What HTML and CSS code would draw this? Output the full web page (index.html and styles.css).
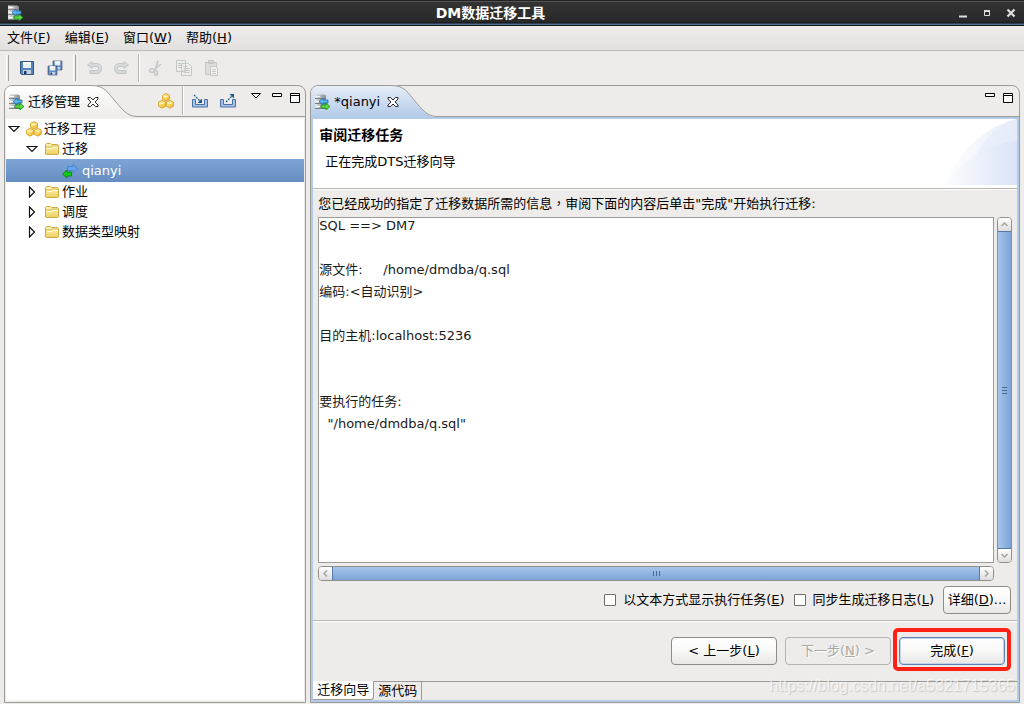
FILE: index.html
```html
<!DOCTYPE html>
<html lang="zh-CN">
<head>
<meta charset="utf-8">
<title>DM数据迁移工具</title>
<link rel="stylesheet" href="styles.css">
</head>
<body>
<svg class="defs" aria-hidden="true">
  <defs>
    <linearGradient id="gold" x1="0" y1="0" x2="1" y2="1"><stop offset="0" stop-color="#fff3a0"/><stop offset="1" stop-color="#efb41c"/></linearGradient>
    <linearGradient id="folderFill" x1="0" y1="0" x2="0" y2="1"><stop offset="0" stop-color="#fff3b4"/><stop offset="1" stop-color="#ecd063"/></linearGradient>
    <linearGradient id="metal" x1="0" x2="1"><stop offset="0" stop-color="#e4e6e8"/><stop offset="1" stop-color="#858b90"/></linearGradient>
    <linearGradient id="tabWhite" x1="0" y1="0" x2="0" y2="1"><stop offset="0" stop-color="#fff"/><stop offset="1" stop-color="#edecea"/></linearGradient>
    <linearGradient id="tabBlue" x1="0" y1="0" x2="0" y2="1"><stop offset="0" stop-color="#e6eef9"/><stop offset="1" stop-color="#b3cae8"/></linearGradient>
    <linearGradient id="arcFill" x1="0" x2="1"><stop offset="0" stop-color="#fff"/><stop offset="1" stop-color="#e6ecf9"/></linearGradient>
    <linearGradient id="arcFill2" x1="0" x2="1"><stop offset="0" stop-color="#fdfdff"/><stop offset="1" stop-color="#dae3f6"/></linearGradient>
    <symbol id="server" viewBox="0 0 16 16">
      <path d="M1 .5h9l2 1v13H1z" fill="url(#metal)"/>
      <path d="M1 4.500h11M1 9.500h11M1 14.500h11" stroke="#7b8185"/>
      <path d="M2 2.500h4M2 7.500h4M2 12.500h4" stroke="#fff"/>
      <path d="M5 7.500l4-3.500v2h5v3H9v2z" fill="#58b6f4" stroke="#1d69b2" stroke-width=".8"/>
      <path d="M16 12.500l-4-3.500v2H7v3h5v2z" fill="#5ddb3c" stroke="#168c1b" stroke-width=".8"/>
    </symbol>
    <symbol id="floppy" viewBox="0 0 16 16">
      <path d="M1.500 1.500h13v13h-12l-1-1z" fill="#5783bb" stroke="#34557f"/>
      <path d="M4 2h8v6H4z" fill="#e8f2f0"/><path d="M4 2h8v2H4z" fill="#fff"/>
      <path d="M4 10h8v4H4z" fill="#c6d3df"/><path d="M5 11h2.500v3H5z" fill="#1f3d66"/>
    </symbol>
    <symbol id="cubes" viewBox="0 0 16 16">
      <g fill="url(#gold)" stroke="#d09a1c" stroke-width=".8">
        <path d="M8 .5l3.500 1.800v4L8 8 4.500 6.300v-4z"/>
        <path d="M4.200 7.300L7.700 9v4.200l-3.500 2-3.600-2V9z"/>
        <path d="M11.800 7.300L15.400 9v4.200l-3.600 2-3.500-2V9z"/>
      </g>
      <path d="M5.500 2.800L8 4l2.500-1.200M1.600 9.500l2.600 1.200 2.500-1.200M9.300 9.500l2.500 1.200 2.600-1.200" stroke="#fffbe0" fill="none"/>
    </symbol>
    <symbol id="folder" viewBox="0 0 16 16">
      <path d="M1.500 13V3.500l1-1h4l1 1h6l1 1V13l-1 .5h-11z" fill="url(#folderFill)" stroke="#cdaa42"/>
      <path d="M2 6h5l1-1h6" stroke="#d9bc5c" fill="none"/><path d="M3 7.500h5l1-1h5" stroke="#fffbdc" fill="none"/>
    </symbol>
    <symbol id="down" viewBox="0 0 12 8"><path d="M1 1.500h10L6 6.500z" fill="#fff" stroke="#111" stroke-width="1.200"/></symbol>
    <symbol id="right" viewBox="0 0 8 12"><path d="M1.500 1l5 5-5 5z" fill="#fff" stroke="#111" stroke-width="1.200"/></symbol>
    <symbol id="close" viewBox="0 0 12 12"><path d="M1 1.500h2.500L6 4l2.500-2.500H11V3L8 6l3 3v1.500H8.500L6 8l-2.500 2.500H1V9l3-3-3-3z" fill="#fff" stroke="#111" stroke-width=".9"/></symbol>
    <symbol id="min" viewBox="0 0 11 5"><path d="M.5.5h9v3h-9z" fill="#fff" stroke="#000"/></symbol>
    <symbol id="max" viewBox="0 0 11 11"><path d="M.5.5h9v9h-9zM.5 2.500h9" fill="#fff" stroke="#000"/></symbol>
  </defs>
</svg>

<div class="app">
  <header class="titlebar">
    <svg class="i16"><use href="#server"/></svg>
    <h1>DM数据迁移工具</h1>
    <div class="winbtns">
      <button aria-label="最小化"><svg width="10" height="10"><path d="M1 8.500h8" stroke="#ddd" stroke-width="2"/></svg></button>
      <button aria-label="最大化"><svg width="10" height="10"><path d="M2.500 3.500h5v4h-5z" stroke="#ddd" fill="none"/><path d="M2 3h6" stroke="#ddd" stroke-width="2"/></svg></button>
      <button aria-label="关闭"><svg width="10" height="10"><path d="M1.500 1.500l7 7M8.500 1.500l-7 7" stroke="#ddd" stroke-width="2.300"/></svg></button>
    </div>
  </header>

  <nav class="menubar">
    <button>文件(<u>F</u>)</button><button>编辑(<u>E</u>)</button><button>窗口(<u>W</u>)</button><button>帮助(<u>H</u>)</button>
  </nav>

  <div class="toolbar">
    <span class="grip"></span>
    <button aria-label="保存"><svg class="i16"><use href="#floppy"/></svg></button>
    <button aria-label="全部保存"><svg class="i16" viewBox="0 0 16 16"><use href="#floppy" x="5" y="0" width="11" height="11"/><use href="#floppy" x="0" y="5" width="11" height="11"/></svg></button>
    <span class="grip second"></span>
    <button disabled aria-label="撤销"><svg class="i16"><path d="M6 1.500L1.500 5 6 8.500V6.500h4.500q2 0 2 2t-2 2H4v3h7q4.500-.5 4.500-5T11 3.500H6z" fill="#d6d9d9" stroke="#c3c6c6"/></svg></button>
    <button disabled aria-label="重做"><svg class="i16"><path d="M10 1.500L14.500 5 10 8.500V6.500H5.500q-2 0-2 2t2 2H12v3H5Q.5 13 .5 8.500T5 3.500h5z" fill="#d6d9d9" stroke="#c3c6c6"/></svg></button>
    <span class="line"></span>
    <button disabled aria-label="剪切"><svg class="i16" fill="none" stroke="#c4c7c8" stroke-width="1.600"><path d="M10 .5L7.500 9M13 4L6 10"/><ellipse cx="4" cy="10.500" rx="2.500" ry="1.800"/><ellipse cx="8" cy="13" rx="1.600" ry="2.200"/></svg></button>
    <button disabled aria-label="复制"><svg class="i16" fill="#eeeeec" stroke="#c4c6c4"><path d="M.5.5h9v11h-9zM5.500 3.500h7l3 3v9h-10z"/><path d="M2 3.500h3M2 5.500h3M2 7.500h3M7.500 6.500h4M7.500 8.500h6M7.500 10.500h6M7.500 12.500h6"/></svg></button>
    <button disabled aria-label="粘贴"><svg class="i16" fill="#dddeda" stroke="#c4c6c4"><path d="M1.500 2.500h11v12h-11zM4.500.5h5v3h-5z"/><path d="M6.500 6.500h5l2 2v7h-7z" fill="#f2f2f0"/><path d="M8 9.500h4M8 11.500h4M8 13.500h4"/></svg></button>
  </div>

  <main class="workspace">
    <section class="panel side">
      <div class="tabrow">
        <div class="tab"><svg class="i16"><use href="#server"/></svg><span>迁移管理</span><svg class="x"><use href="#close"/></svg></div>
        <svg class="curve" viewBox="0 0 46 32"><path d="M0 0C14 0 17 8 24 16S36 32 46 32H0z" fill="url(#tabWhite)"/><path d="M0 .5C14 .5 17 8 24 16S36 31.500 46 31.500" fill="none" stroke="#9d9b97"/></svg>
        <div class="tools">
          <button aria-label="工程"><svg class="i16"><use href="#cubes"/></svg></button>
          <span class="line"></span>
          <button aria-label="导入"><svg class="i16" fill="none"><path d="M3.500 6.500h-3v7.500h15V6.500h-3v5h-9z" fill="#a9c2e4" stroke="#4c71aa"/><path d="M2 2l6 6" stroke="#155c86" stroke-width="1.200" stroke-dasharray="2 1"/><path d="M10 5.500V10H5.500z" fill="#155c86"/></svg></button>
          <button aria-label="导出"><svg class="i16" fill="none"><path d="M3.500 6.500h-3v7.500h15V6.500h-3v5h-9z" fill="#a9c2e4" stroke="#4c71aa"/><path d="M6 9l6-6" stroke="#155c86" stroke-width="1.200" stroke-dasharray="2 1"/><path d="M14 1v4.500L9.500 1z" fill="#155c86"/></svg></button>
        </div>
        <div class="viewbtns">
          <button aria-label="菜单"><svg width="10" height="6"><path d="M.5.5h9L5 5z" fill="#fff" stroke="#000"/></svg></button>
          <button aria-label="最小化视图"><svg width="11" height="5"><use href="#min"/></svg></button>
          <button aria-label="最大化视图"><svg width="11" height="11"><use href="#max"/></svg></button>
        </div>
      </div>
      <ul class="tree">
        <li class="l0"><svg class="arrow"><use href="#down"/></svg><svg class="i16"><use href="#cubes"/></svg>迁移工程</li>
        <li class="l1"><svg class="arrow"><use href="#down"/></svg><svg class="i16"><use href="#folder"/></svg>迁移</li>
        <li class="l2 selected"><svg class="i16"><path d="M15.500 5.500L11 1.500v2H5.500v4H11v2z" fill="#65a5ec" stroke="#3c7dcd" stroke-width=".8"/><path d="M.5 11L5 7v2h4.500v4H5v2z" fill="#0fcc13" stroke="#087a14" stroke-width=".8"/></svg>qianyi</li>
        <li class="l1"><svg class="arrow"><use href="#right"/></svg><svg class="i16"><use href="#folder"/></svg>作业</li>
        <li class="l1"><svg class="arrow"><use href="#right"/></svg><svg class="i16"><use href="#folder"/></svg>调度</li>
        <li class="l1"><svg class="arrow"><use href="#right"/></svg><svg class="i16"><use href="#folder"/></svg>数据类型映射</li>
      </ul>
    </section>

    <section class="panel editor">
      <div class="tabrow">
        <div class="tab"><svg class="i16"><use href="#server"/></svg><span>*qianyi</span><svg class="x"><use href="#close"/></svg></div>
        <svg class="curve" viewBox="0 0 46 32"><path d="M0 0C14 0 17 8 24 16S36 32 46 32H0z" fill="url(#tabBlue)"/><path d="M0 .5C14 .5 17 8 24 16S36 31.500 46 31.500" fill="none" stroke="#9d9b97"/></svg>
        <div class="tools"></div>
        <div class="viewbtns">
          <button aria-label="最小化编辑器"><svg width="11" height="5"><use href="#min"/></svg></button>
          <button aria-label="最大化编辑器"><svg width="11" height="11"><use href="#max"/></svg></button>
        </div>
      </div>
      <div class="page">
        <div class="banner">
          <div><h2>审阅迁移任务</h2><p>正在完成DTS迁移向导</p></div>
          <svg class="arcs" viewBox="0 0 74 66"><path d="M0 66Q28 10 74 0V66z" fill="url(#arcFill)"/><path d="M0 66Q34 24 74 22V66z" fill="url(#arcFill2)"/><path d="M34 35Q46 10 74 0V22Q52 23 34 35z" fill="#e3eaf9" opacity=".5"/></svg>
        </div>
        <div class="content">
          <label class="prompt" for="review">您已经成功的指定了迁移数据所需的信息<span class="tc" lang="zh-TW">，</span>审阅下面的内容后单击"完成"开始执行迁移:</label>
          <div class="scrollgrid">
            <div class="textbox"><textarea id="review" readonly spellcheck="false">SQL ==&gt; DM7

源文件:     /home/dmdba/q.sql
编码:&lt;自动识别&gt;

目的主机:localhost:5236


要执行的任务:
  "/home/dmdba/q.sql"</textarea></div>
            <div class="scroll vertical">
              <button aria-label="向上"><svg width="9" height="9"><path d="M1.500 6l3-3 3 3" fill="none" stroke="#a5a4a1" stroke-width="1.500"/></svg></button>
              <div class="thumb"><i></i><i></i><i></i></div>
              <button aria-label="向下"><svg width="9" height="9"><path d="M1.500 3l3 3 3-3" fill="none" stroke="#a5a4a1" stroke-width="1.500"/></svg></button>
            </div>
            <div class="scroll horizontal">
              <button aria-label="向左"><svg width="9" height="9"><path d="M6 1.500l-3 3 3 3" fill="none" stroke="#a5a4a1" stroke-width="1.500"/></svg></button>
              <div class="thumb"><i></i><i></i><i></i></div>
              <button aria-label="向右"><svg width="9" height="9"><path d="M3 1.500l3 3-3 3" fill="none" stroke="#a5a4a1" stroke-width="1.500"/></svg></button>
            </div>
          </div>
          <div class="options">
            <label><input type="checkbox"><span>以文本方式显示执行任务(<u>E</u>)</span></label>
            <label><input type="checkbox"><span>同步生成迁移日志(<u>L</u>)</span></label>
            <button class="btn small">详细(<u>D</u>)...</button>
          </div>
        </div>
        <div class="actions">
          <button class="btn">&lt; 上一步(<u>L</u>)</button>
          <button class="btn" disabled>下一步(<u>N</u>) &gt;</button>
          <div class="highlight"><button class="btn primary">完成(<u>F</u>)</button></div>
        </div>
        <div class="bottomtabs"><button class="active">迁移向导</button><button>源代码</button></div>
      </div>
    </section>
  </main>
  <div class="watermark">https://blog.csdn.net/a5321715365</div>
</div>
</body>
</html>
```

FILE: styles.css
```css
* { box-sizing: border-box; }
body { margin: 0; font: 13px/20px "DejaVu Sans", "Noto Sans CJK SC", sans-serif; color: #000; background: #edecea; }
button, textarea { font: inherit; color: inherit; }
button { border: 0; background: none; padding: 0; margin: 0; white-space: nowrap; }
h1, h2, p, ul { margin: 0; padding: 0; }
svg { display: block; flex: none; }
u { text-underline-offset: 1px; }
.defs { position: absolute; width: 0; height: 0; }
.i16 { width: 16px; height: 16px; }
.app { position: relative; display: flex; flex-direction: column; height: 100vh; overflow: hidden; }

.titlebar { display: flex; align-items: center; height: 26px; flex: none; padding: 0 8px 0 7px; color: #fff;
  background: linear-gradient(#222 0 1px, #555 1px 2px, #333 2px, #292929 22px, #111 23px, #527196 24px 25px, #161616 25px); }
.titlebar h1 { flex: 1; text-align: center; font-size: 14px; line-height: 24px; }
.winbtns { display: flex; gap: 14px; }

.menubar { display: flex; gap: 14px; height: 25px; flex: none; padding: 0 7px; border-bottom: 1px solid #bbb9b6; background: linear-gradient(#eeedeb, #e2e1df); }

.toolbar { display: flex; align-items: center; gap: 12px; height: 34px; flex: none; padding: 0 6px; }
.grip { width: 3px; height: 26px; margin-right: -2px; border-left: 1px solid #fff; border-right: 1px solid #a3a19e; }
.grip.second { margin-left: -2px; }
.line { width: 2px; height: 28px; border-left: 1px solid #b4b2af; border-right: 1px solid #fff; }
.toolbar .line { margin: 0 -4px; }

.workspace { flex: 1; min-height: 0; display: grid; grid-template-columns: 302fr 709fr; gap: 4px; padding: 0 4px 1px 4px; }
.panel { min-width: 0; min-height: 0; display: flex; flex-direction: column; border: 1px solid #9d9b97; border-radius: 8px 8px 0 0; }
.tabrow { display: flex; height: 31px; flex: none; }
.tab { display: flex; align-items: center; gap: 4px; width: 86px; padding: 0 0 0 3px; white-space: nowrap; border-radius: 7px 0 0; background: linear-gradient(#fff, #edecea); }
.tab .x { position: relative; z-index: 1; width: 12px; height: 12px; margin-left: 3px; }
.editor .tab { width: 80px; background: linear-gradient(#e6eef9, #b3cae8); }
.curve { width: 46px; height: 32px; margin-top: -1px; }
.tools { flex: 1; display: flex; align-items: center; justify-content: flex-end; gap: 12px; border-bottom: 1px solid #9d9b97; }
.tools .line { margin: 0 -4px; }
.viewbtns { display: flex; align-items: flex-start; gap: 7px; padding: 7px 5px 0 15px; border-bottom: 1px solid #9d9b97; }
.side .viewbtns { padding-right: 4px; }
.side .viewbtns button:first-child { margin-right: 4px; }

.tree { flex: 1; margin: 1px; border: 1px solid #f3f2f1; border-width: 1px 0; background: #fff; list-style: none; }
.tree li { display: flex; align-items: center; gap: 2px; height: 20px; }
.tree .arrow { width: 12px; height: 12px; margin-right: 4px; }
.tree .l0 { padding-left: 2px; }
.tree .l1 { padding-left: 20px; }
.tree .l2 { padding-left: 56px; gap: 4px; }
.tree .selected { height: 23px; color: #fff; background: linear-gradient(#7fa5d6, #658dc1); }

.page { flex: 1; min-height: 0; display: flex; flex-direction: column; border: 2px solid #b3cae8; }
.banner { display: flex; justify-content: space-between; height: 70px; flex: none; padding-left: 6px; background: #fff; border-bottom: 1px solid #b8b6b3; box-shadow: 0 1px #fff; }
.banner h2 { font-size: 14px; line-height: 20px; margin-top: 6px; }
.banner p { padding: 7px 0 0 6px; }
.arcs { width: 74px; height: 66px; }
.content { flex: 1; min-height: 0; display: flex; flex-direction: column; padding: 4px 5px 6px; border-bottom: 1px solid #b8b6b3; box-shadow: 0 1px #fff; }
.prompt { line-height: 20px; margin-bottom: 3px; white-space: nowrap; }
.tc { font-family: "Noto Sans CJK TC", sans-serif; }
.scrollgrid { flex: 1; min-height: 0; display: grid; grid-template: minmax(0, 1fr) 15px / minmax(0, 1fr) 15px; gap: 3px; }
.textbox { overflow: hidden; border: 1px solid #9d9b97; background: #fff; }
.textbox textarea { display: block; width: 100%; height: 100%; margin-top: -3px; padding: 0; border: 0; outline: 0; resize: none; overflow: hidden; line-height: 22px; background: none; color: #1a1a1a; }
.scroll { display: flex; border: 1px solid #8f8e8b; border-radius: 4px; overflow: hidden; }
.scroll button { flex: none; width: 13px; height: 13px; display: grid; place-items: center; background: linear-gradient(#fff, #dedddb); }
.vertical { flex-direction: column; }
.thumb { flex: 1; display: flex; align-items: center; justify-content: center; gap: 2px; }
.vertical .thumb { flex-direction: column; margin: 0 -1px; border: 1px solid #5778a8; background: linear-gradient(90deg, #a8c6ec, #7ba2d6); }
.horizontal .thumb { margin: -1px 0; border: 1px solid #5778a8; background: linear-gradient(#a8c6ec, #7ba2d6); }
.thumb i { background: #47688f; }
.vertical i { width: 5px; height: 1px; }
.horizontal i { width: 1px; height: 5px; }

.options { display: flex; align-items: center; justify-content: flex-end; gap: 9px; margin: 5px 1px 0 0; }
.options label { display: flex; align-items: center; gap: 7px; white-space: nowrap; }
.options input { appearance: none; width: 12px; height: 12px; margin: 0; border: 1px solid #6f6e6b; border-radius: 1px; background: #fff; }
.btn { width: 106px; height: 28px; border: 1px solid #8e8c89; border-radius: 4px; background: linear-gradient(#fff, #f9f9f8 45%, #e8e7e5); }
.btn.small { width: 68px; }
.btn:disabled { color: #a9a7a3; border-color: #b6b4b1; background: #edecea; text-shadow: 1px 1px #fff; }
.btn.primary { border-color: #6082b0; box-shadow: inset 0 0 0 1px #c5d4e8; }
.actions { display: flex; align-items: center; justify-content: flex-end; gap: 8px; height: 60px; flex: none; padding-right: 6px; }
.actions .highlight { margin-left: -6px; margin-top: -3px; padding: 5px 2px 2px; border: 4px solid #fc2114; border-radius: 5px; }
.bottomtabs { display: flex; height: 19px; flex: none; border-top: 1px solid #9d9b97; line-height: 18px; }
.bottomtabs button { padding: 0 4px; border-right: 1px solid #9d9b97; }
.bottomtabs .active { margin-top: -1px; background: #fff; border-bottom: 1px solid #9d9b97; border-radius: 0 0 3px; }
.watermark { position: absolute; right: 9px; bottom: 6px; font: 16px/24px "Liberation Sans", sans-serif; color: rgba(255,255,255,.65); text-shadow: 1px 1px 1px rgba(100,100,100,.25); pointer-events: none; }
```
